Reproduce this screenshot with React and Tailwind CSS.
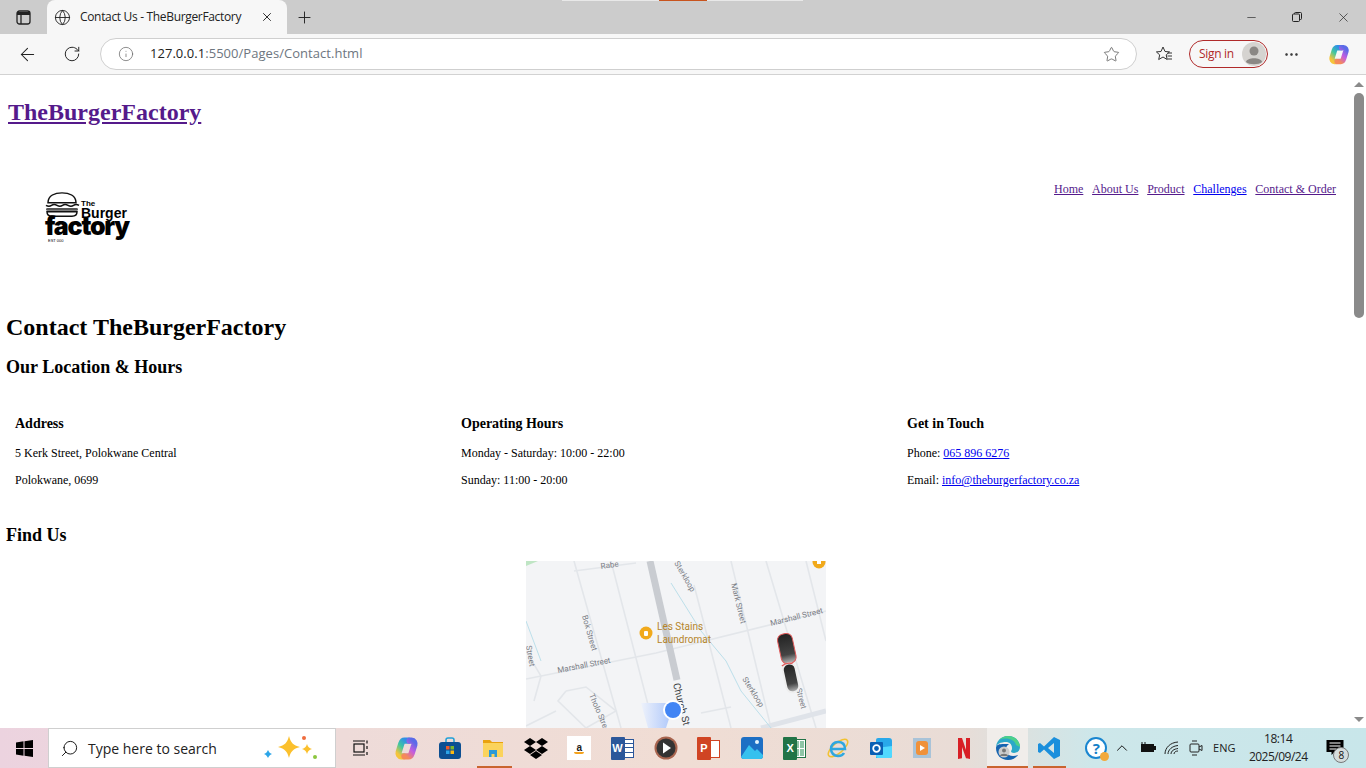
import React from "react";
import { ArrowLeft, RotateCw, Info, Star, Globe, X, Plus, Minus, MoreHorizontal, ChevronUp, Search } from "lucide-react";

const serif = "font-['Liberation_Serif',serif]";

function MapArt() {
  const road = "#e3e6ea";
  return (
    <svg width="300" height="167" viewBox="0 0 300 167" className="block">
      <defs>
        <linearGradient id="cone" x1="1" y1="0.5" x2="0" y2="0.5"><stop offset="0" stopColor="#a9c4fa" /><stop offset="1" stopColor="#eef2fb" /></linearGradient>
        <linearGradient id="car" x1="0" y1="0" x2="0" y2="1"><stop offset="0" stopColor="#222" /><stop offset="0.7" stopColor="#444" /><stop offset="1" stopColor="#bbb" /></linearGradient>
      </defs>
      <rect width="300" height="167" fill="#f3f4f6" />
      <path d="M0 0h12l-12 5z" fill="#bfe5c4" />
      <g stroke={road} strokeWidth="1.6" fill="none">
        <path d="M48 0L95 167M85 0L128 167M205 0L245 167M240 0L290 167M280 0L300 80" />
        <path d="M0 118L130 92L300 50M48 10L110 2" />
        <path d="M168 24L205 167M0 165L30 150M175 152L205 146" />
        <path d="M40 130L60 126L90 150L60 167M40 130L32 140L60 167" />
        <path d="M0 90L15 115L8 140" />
      </g>
      <path d="M124 0L151 119" stroke="#c9ccd1" strokeWidth="7" />
      <path d="M235 167L300 150" stroke="#dfe3e9" strokeWidth="5" />
      <path d="M145 22L175 70L200 100L215 130L245 167M0 60L15 100" stroke="#bcdfea" strokeWidth="1" fill="none" />
      <path d="M115 142H148L140 167H122z" fill="url(#cone)" />
      <circle cx="120" cy="72" r="6.5" fill="#f1a91b" />
      <rect x="118" y="70" width="4" height="5" rx="1" fill="#fff" />
      <circle cx="293" cy="1" r="6.5" fill="#f1a91b" />
      <rect x="291" y="0" width="4" height="3" fill="#fff" />
      <g fontFamily="'Roboto',sans-serif" fontSize="8" fill="#7c8087">
        <text x="75" y="8" transform="rotate(-8 75 8)">Rabe</text>
        <text x="148" y="2" transform="rotate(60 148 2)">Sterkloop</text>
        <text x="205" y="23" transform="rotate(76 205 23)">Mark Street</text>
        <text x="56" y="55" transform="rotate(74 56 55)">Bok Street</text>
        <text x="32" y="112" transform="rotate(-11 32 112)">Marshall Street</text>
        <text x="245" y="65" transform="rotate(-14 245 65)">Marshall Street</text>
        <text x="216" y="118" transform="rotate(58 216 118)">Sterkloop</text>
        <text x="63" y="134" transform="rotate(67 63 134)">Tholo Street</text>
        <text x="0" y="85" transform="rotate(80 0 85)">Street</text>
        <text x="270" y="128" transform="rotate(75 270 128)">Street</text>
      </g>
      <text x="147" y="123" transform="rotate(76 147 123)" fontFamily="'Roboto',sans-serif" fontSize="10" fill="#3c4043">Church St</text>
      <g fontFamily="'Roboto',sans-serif" fontSize="10" fill="#b5852a">
        <text x="131" y="69">Les Stains</text>
        <text x="131" y="82">Laundromat</text>
      </g>
      <g transform="rotate(-12 265 100)">
        <rect x="256" y="72" width="15" height="30" rx="6" fill="url(#car)" stroke="#e05a5a" strokeWidth="1" />
        <rect x="255" y="102" width="13" height="29" rx="6" fill="url(#car)" stroke="#eeeeee" strokeWidth="2" />
        <path d="M255 103q5.500-3 11 0" stroke="#e05a5a" fill="none" strokeWidth="1.200" />
      </g>
      <circle cx="147" cy="149" r="10" fill="#fff" />
      <circle cx="147" cy="149" r="8" fill="#4285f4" />
    </svg>
  );
}

function Logo() {
  return (
    <div className="relative w-[88px] h-[52px]">
      <svg width="36" height="27" viewBox="0 0 36 30" className="absolute left-0 top-0" preserveAspectRatio="none">
        <path d="M3 13C3 5 10 2 17 2s14 3 14 11z" fill="#fff" stroke="#111" strokeWidth="1.5" />
        <path d="M1 16q3 2 5.500 0t5.500 0 5.500 0 5.500 0 5.500 0 5.500 0" fill="none" stroke="#111" strokeWidth="1.5" />
        <rect x="1" y="19" width="32" height="3" rx="1.500" fill="#555" />
        <path d="M2 23h30c0 4-3 5-5 5H7c-2 0-5-1-5-5z" fill="#fff" stroke="#111" strokeWidth="1.5" />
      </svg>
      <span className="absolute left-[36px] top-[9px] font-['Liberation_Sans',sans-serif] font-bold text-[8px] leading-[8px] text-black">The</span>
      <span className="absolute left-[36px] top-[15px] font-['Liberation_Sans',sans-serif] font-bold text-[14px] leading-[14px] text-black">Burger</span>
      <span className="absolute left-0 top-[21px] font-['Inter',sans-serif] font-black text-[25px] leading-[28px] tracking-[-1.2px] text-black">factory</span>
      <span className="absolute left-[3px] top-[48px] font-['Liberation_Sans',sans-serif] text-[4px] leading-[4px] text-black">EST 000</span>
    </div>
  );
}

function CopilotIcon({ size }) {
  return (
    <svg width={size} height={size} viewBox="0 0 24 24" fill="none" strokeWidth="6" strokeLinecap="round">
      <defs>
        <linearGradient id="cpl" x1="0.8" y1="0" x2="0.2" y2="1"><stop offset="0" stopColor="#2f8fe8" /><stop offset="0.5" stopColor="#3fc7a0" /><stop offset="1" stopColor="#f5c43b" /></linearGradient>
        <linearGradient id="cpr" x1="0.8" y1="0" x2="0.2" y2="1"><stop offset="0" stopColor="#5a6be8" /><stop offset="0.5" stopColor="#c45ce0" /><stop offset="1" stopColor="#f58a5a" /></linearGradient>
      </defs>
      <path d="M14 4.500H10C8 4.500 7.500 6 7 7.500L4.500 15.500C4 17.500 5 19.500 7 19.500H9" stroke="url(#cpl)" />
      <path d="M10 19.500H14C16 19.500 16.500 18 17 16.500L19.500 8.500C20 6.500 19 4.500 17 4.500H15" stroke="url(#cpr)" />
    </svg>
  );
}

function BrowserChrome() {
  return (
    <div className="shrink-0 font-['Open_Sans',sans-serif]">
      <div className="relative h-[34px] bg-[#cccccc] flex items-end">
        <div className="absolute left-[562px] top-0 h-px w-[241px] bg-[#e8e8e8]" />
        <div className="absolute left-[659px] top-0 h-px w-[48px] bg-[#c8541e]" />
        <div className="w-[47px] h-[34px] flex items-center justify-center">
          <svg width="15" height="15" viewBox="0 0 15 15" fill="none" stroke="#222" strokeWidth="1.300"><rect x="1" y="1" width="13" height="13" rx="2.500" /><path d="M1 3.500h13" strokeWidth="3" /><path d="M5 2v12" /></svg>
        </div>
        <div className="w-[240px] h-[34px] bg-[#f7f7f7] rounded-t-[8px] flex items-center pl-[7px] pr-[13px] text-[#222]">
          <Globe size={17} strokeWidth={1.3} />
          <span className="ml-[9px] text-[12px] leading-none flex-1 tracking-[-0.33px]">Contact Us - TheBurgerFactory</span>
          <X size={14} strokeWidth={1.6} />
        </div>
        <div className="w-[34px] h-[34px] flex items-center justify-center text-[#222]">
          <Plus size={19} strokeWidth={1.2} />
        </div>
        <div className="ml-auto flex h-[34px] items-center text-[#222]">
          <div className="w-[46px] flex justify-center"><Minus size={13} strokeWidth={1.2} /></div>
          <div className="w-[46px] flex justify-center">
            <svg width="12" height="12" viewBox="0 0 12 12" fill="none" stroke="#222"><rect x="1.500" y="3" width="7" height="7.500" rx="1" /><path d="M3.500 3V2.500a1 1 0 0 1 1-1h5a1 1 0 0 1 1 1v5a1 1 0 0 1-1 1H9" /></svg>
          </div>
          <div className="w-[46px] flex justify-center"><X size={15} strokeWidth={1.1} /></div>
        </div>
      </div>
      <div className="h-[41px] bg-[#f7f7f7] border-b border-[#d2d2d2] flex items-center text-[#222]">
        <div className="w-[55px] flex justify-center"><ArrowLeft size={21} strokeWidth={1.2} /></div>
        <div className="w-[33px] flex justify-center"><RotateCw size={18} strokeWidth={1.3} /></div>
        <div className="ml-[12px] w-[1037px] h-[32px] bg-white border border-[#cfcfcf] rounded-full flex items-center pl-[17px] pr-[16px]">
          <Info size={16} strokeWidth={1.1} className="text-[#666]" />
          <span className="ml-[16px] text-[13px] tracking-[0.04px] text-[#222]">127.0.0.1<span className="text-[#6e7680]">:5500/Pages/Contact.html</span></span>
          <Star size={17} strokeWidth={1.1} className="ml-auto text-[#555]" />
        </div>
        <div className="w-[52px] pl-[1px] flex justify-center">
          <svg width="18" height="18" viewBox="0 0 18 18" fill="none" stroke="#333" strokeWidth="1"><path d="M8 2l2 4.500 4.500.4-3.300 3 1 4.600L8 12l-4.300 2.500 1-4.600-3.300-3L6 6.500z" /><path d="M12.500 8h4.500M12.500 11h4.500M12.500 14h4.500" /></svg>
        </div>
        <div className="w-[79px] h-[28px] rounded-full border border-[#b02a2a] flex items-center pl-[9px] pr-[1px] justify-between">
          <span className="text-[12px] tracking-[-0.3px] text-[#b02a2a]">Sign in</span>
          <svg width="24" height="24" viewBox="0 0 24 24"><circle cx="12" cy="12" r="12" fill="#d5d3d0" /><circle cx="12" cy="9" r="4.500" fill="#8a8784" /><path d="M4 20c1-5 15-5 16 0-3 3-13 3-16 0z" fill="#8a8784" /></svg>
        </div>
        <div className="w-[47px] flex justify-center"><MoreHorizontal size={17} strokeWidth={1.5} /></div>
        <div className="ml-[13px] flex justify-center w-[22px]"><CopilotIcon size={23} /></div>
      </div>
    </div>
  );
}

function TaskIcon({ children, className = "w-[43.2px]", line, shaded }) {
  return (
    <div className={`relative h-[40px] shrink-0 flex items-center justify-center ${shaded ? "bg-[#f0edea]" : ""} ${className}`}>
      {children}
      {line && <div className={`absolute bottom-0 h-[2px] bg-[#c9642f] ${line}`} />}
    </div>
  );
}

function Taskbar() {
  return (
    <div className="h-[40px] shrink-0 flex items-center bg-[linear-gradient(90deg,#ecd3df_0%,#eedbd9_25%,#f0ddd4_50%,#e9dcd6_70%,#cde7ea_80%,#c8e6ea_100%)] font-['Open_Sans',sans-serif] text-[#111]">
      <div className="w-[48px] flex justify-center">
        <svg width="17" height="17" viewBox="0 0 17 17" fill="#000"><path d="M0 2.400L7.500 1.300V8H0zM8.500 1.200L17 0V8H8.500zM0 9h7.500v6.700L0 14.600zM8.500 9H17v8l-8.500-1.200z" /></svg>
      </div>
      <div className="w-[288px] h-[40px] bg-white border border-[#cfcfcf] flex items-center pl-[11px] relative">
        <Search size={19} strokeWidth={1.2} className="-scale-x-100" />
        <span className="ml-[9px] text-[14px] tracking-[0] text-[#222]">Type here to search</span>
        <svg width="66" height="30" viewBox="0 0 66 30" className="absolute right-[14px] top-[5px]">
          <path d="M34 2c2 7 4 9 11 11-7 2-9 4-11 11-2-7-4-9-11-11 7-2 9-4 11-11z" fill="#fbc02d" />
          <path d="M52 10c1 3 2 4 5 5-3 1-4 2-5 5-1-3-2-4-5-5 3-1 4-2 5-5z" fill="#fbc02d" />
          <path d="M13 16c1 2 1.500 3 4 4-2.500 1-3 2-4 4-1-2-1.500-3-4-4 2.500-1 3-2 4-4z" fill="#2ba5e8" />
          <circle cx="49" cy="4" r="2" fill="#ef6c3e" />
          <circle cx="60" cy="23" r="2" fill="#8cc63f" />
        </svg>
      </div>
      <TaskIcon className="w-[49px]">
        <svg width="16" height="18" viewBox="0 0 16 18" fill="none" stroke="#111" strokeWidth="1.200"><rect x="1" y="5" width="10" height="8" /><path d="M0 2h12M0 16h12M14 1.500v3M14 7v3M14 13v3" /></svg>
      </TaskIcon>
      <TaskIcon><CopilotIcon size={25} /></TaskIcon>
      <TaskIcon>
        <svg width="24" height="24" viewBox="0 0 24 24"><path d="M8 6V4a2 2 0 0 1 2-2h4a2 2 0 0 1 2 2v2" fill="none" stroke="#1fa0d8" strokeWidth="1.500" /><rect x="1" y="6" width="22" height="17" rx="3" fill="#0c4f92" /><rect x="8" y="10" width="3.500" height="3.500" fill="#ef5a29" /><rect x="12.500" y="10" width="3.500" height="3.500" fill="#7cb62b" /><rect x="8" y="14.500" width="3.500" height="3.500" fill="#2ba4e8" /><rect x="12.500" y="14.500" width="3.500" height="3.500" fill="#fcb813" /></svg>
      </TaskIcon>
      <TaskIcon line="left-[6px] right-[3px]">
        <svg width="22" height="20" viewBox="0 0 22 20"><path d="M1 2h7l2 2h11v4H1z" fill="#e9a20f" /><path d="M1 5h20v14H1z" fill="#fbd35c" /><path d="M7 12h8v7h-2.500v-3h-3v3H7z" fill="#2b9ad8" /></svg>
      </TaskIcon>
      <TaskIcon>
        <svg width="24" height="22" viewBox="0 0 24 22" fill="#000"><path d="M6 1l6 4-6 4-6-4zM18 1l6 4-6 4-6-4zM6 9l6 4-6 4-6-4zM18 9l6 4-6 4-6-4zM12 14l6 4-6 4-6-4z" /></svg>
      </TaskIcon>
      <TaskIcon>
        <div className="w-[24px] h-[24px] bg-white flex flex-col items-center justify-center leading-none font-['Liberation_Sans',sans-serif]">
          <span className="text-[10px] font-bold text-[#222] leading-[9px]">a</span>
          <span className="w-[10px] h-[2px] rounded-b-full bg-[#f4a21c]" />
        </div>
      </TaskIcon>
      <TaskIcon>
        <div className="relative w-[24px] h-[23px]">
          <div className="absolute left-[10px] top-[2px] w-[13px] h-[19px] bg-white border border-[#2b579a] flex flex-col justify-around py-[2px] pl-[2px]">
            <span className="h-px bg-[#2b579a]" /><span className="h-px bg-[#2b579a]" /><span className="h-px bg-[#2b579a]" />
          </div>
          <div className="absolute left-0 top-0 w-[14px] h-[23px] bg-[#2b579a] rounded-[1px] flex items-center justify-center text-white font-bold text-[11px] font-['Liberation_Sans',sans-serif]">W</div>
        </div>
      </TaskIcon>
      <TaskIcon>
        <svg width="24" height="24" viewBox="0 0 24 24"><circle cx="12" cy="12" r="11.500" fill="#a8654f" /><circle cx="12" cy="12" r="9.500" fill="#333" /><path d="M9 6.500l8 5.500-8 5.500z" fill="#fff" /></svg>
      </TaskIcon>
      <TaskIcon>
        <div className="relative w-[24px] h-[23px]">
          <div className="absolute left-[10px] top-[3px] w-[13px] h-[18px] bg-white border border-[#d04423]" />
          <div className="absolute left-0 top-0 w-[14px] h-[23px] bg-[#d04423] rounded-[1px] flex items-center justify-center text-white font-bold text-[11px] font-['Liberation_Sans',sans-serif]">P</div>
        </div>
      </TaskIcon>
      <TaskIcon>
        <svg width="22" height="22" viewBox="0 0 22 22"><rect width="22" height="22" rx="3" fill="#1d6fc4" /><path d="M0 20L8 8l6 6 2-2 6 6v1a3 3 0 0 1-3 3H3a3 3 0 0 1-3-2z" fill="#35c1ee" /><circle cx="16" cy="5" r="2" fill="#e3f4fd" /></svg>
      </TaskIcon>
      <TaskIcon>
        <div className="relative w-[24px] h-[23px]">
          <div className="absolute left-[10px] top-[2px] w-[13px] h-[19px] bg-white border border-[#217346] grid grid-cols-2 gap-px p-px">
            <span className="bg-[#8fc5a6]" /><span className="bg-[#8fc5a6]" /><span className="bg-[#8fc5a6]" /><span className="bg-[#8fc5a6]" />
          </div>
          <div className="absolute left-0 top-0 w-[14px] h-[23px] bg-[#217346] rounded-[1px] flex items-center justify-center text-white font-bold text-[11px] font-['Liberation_Sans',sans-serif]">X</div>
        </div>
      </TaskIcon>
      <TaskIcon>
        <svg width="24" height="24" viewBox="0 0 24 24" fill="none"><ellipse cx="12" cy="12" rx="12" ry="5" transform="rotate(-40 12 12)" stroke="#f2c230" strokeWidth="1.500" /><path d="M5 13h14c0-5-3-7-7-7s-7 3-7 7 3 7 7 7c3 0 5-1 6-3" stroke="#2fa7e0" strokeWidth="2.500" /></svg>
      </TaskIcon>
      <TaskIcon>
        <svg width="24" height="24" viewBox="0 0 24 24"><path d="M8 2h11a3 3 0 0 1 3 3v15a2 2 0 0 1-2 2H6V4a2 2 0 0 1 2-2z" fill="#28a8ea" /><path d="M6 12l16-2v10a2 2 0 0 1-2 2H8a2 2 0 0 1-2-2z" fill="#50d9ff" /><rect x="0" y="6" width="13" height="13" rx="1" fill="#0a5fb4" /><circle cx="6.500" cy="12.500" r="3.300" fill="none" stroke="#fff" strokeWidth="1.800" /></svg>
      </TaskIcon>
      <TaskIcon className="w-[37px]">
        <svg width="20" height="22" viewBox="0 0 20 22"><rect x="1" y="1" width="18" height="20" fill="#a9c3d8" /><rect x="4" y="4" width="12" height="14" rx="3" fill="#f0913a" /><path d="M8 8l5 3-5 3z" fill="#fff" /></svg>
      </TaskIcon>
      <TaskIcon className="w-[47px]">
        <svg width="12" height="21" viewBox="0 0 12 21"><path d="M0 0h4l4 12V0h4v21c-1.300-.4-2.700-.6-4-.7L4 9v11.200L0 21z" fill="#d81f26" /></svg>
      </TaskIcon>
      <TaskIcon className="w-[41px]" line="left-0 right-0" shaded>
        <svg width="26" height="26" viewBox="0 0 26 26"><path d="M1 13C1 6 6 1 13 1s12 5 12 11c0 4-3 6-6 6-2 0-3-1-3-2 1-1 1-2 1-3 0-4-3-6-6-6-5 0-10 2-10 6z" fill="#2aa8c8" /><path d="M25 12c0-6-5-11-12-11-4 0-7 2-9 4 6-3 16-1 17 5z" fill="#4cd08a" /><path d="M1 13c0 7 5 12 12 12 4 0 8-2 10-5-5 2-10 1-12-3-1-3 0-6 3-8-6 0-13-1-13 4z" fill="#1564b0" /><circle cx="9" cy="17" r="5.500" fill="#ccc" /><circle cx="9" cy="15.500" r="2" fill="#777" /><path d="M5 21c0-3 8-3 8 0z" fill="#777" /></svg>
      </TaskIcon>
      <TaskIcon className="w-[41px]" line="left-[5px] right-[3px]">
        <svg width="24" height="24" viewBox="0 0 24 24"><path d="M17 1l6 3v16l-6 3-10-9.500L3 17l-2-1V8l2-1 4 3.500zM17 7l-6 5 6 5z" fill="#1a8fdc" fillRule="evenodd" /></svg>
      </TaskIcon>
      <div className="ml-[14px] w-[26px] flex justify-center">
        <div className="relative w-[22px] h-[22px] rounded-full bg-white border-2 border-[#1a86d0] flex items-center justify-center text-[#1580c8] font-bold text-[15px] leading-none">
          ?
          <span className="absolute -right-[4px] -bottom-[4px] w-[9px] h-[9px] rounded-full bg-[#f2a93b]" />
        </div>
      </div>
      <div className="w-[26px] flex justify-center"><ChevronUp size={18} strokeWidth={1.3} /></div>
      <div className="w-[24px] flex justify-center">
        <svg width="17" height="12" viewBox="0 0 17 12"><rect x="2" y="2" width="13" height="8" fill="#111" /><rect x="15" y="4" width="2" height="4" fill="#111" /><path d="M3 0v2M6 0v2" stroke="#111" /></svg>
      </div>
      <div className="w-[25px] flex justify-center">
        <svg width="15" height="14" viewBox="0 0 15 14" fill="none" stroke="#222"><path d="M1 13C1 7 6 1.500 14 1M4 13c0-4 4-8 10-8.500M7 13c0-3 3-5 7-5.500M10 13c0-2 2-3 4-3" /></svg>
      </div>
      <div className="w-[24px] flex justify-center">
        <svg width="14" height="18" viewBox="0 0 14 18" fill="none" stroke="#222"><rect x="1" y="5" width="9" height="8" rx="1" /><path d="M10 8l3-1.500v5L10 10M3 2h5M3 16h5" /></svg>
      </div>
      <div className="w-[32px] text-center text-[11px] text-[#222]">ENG</div>
      <div className="ml-[2px] w-[72px] flex flex-col items-center text-[12px] leading-[18px] text-[#222]">
        <span className="tracking-[-0.4px]">18:14</span>
        <span className="tracking-[-0.5px]">2025/09/24</span>
      </div>
      <div className="relative ml-[12px] w-[22px] h-[30px] flex items-center">
        <svg width="18" height="16" viewBox="0 0 17 16"><path d="M0 0h17v12H8l-3 3v-3H0z" fill="#000" /><path d="M3 3h11M3 6h11M3 9h7" stroke="#fff" /></svg>
        <span className="absolute left-[7px] top-[14px] w-[16px] h-[16px] rounded-full bg-[#d5dcdc] border border-[#777] flex items-center justify-center text-[10px] leading-none">8</span>
      </div>
    </div>
  );
}

function Scrollbar() {
  return (
    <div className="w-[15px] shrink-0 bg-white flex flex-col items-center">
      <div className="h-[18px] flex items-center">
        <div className="w-0 h-0 border-x-[5px] border-x-transparent border-b-[5px] border-b-[#8a8a8a]" />
      </div>
      <div className="w-[10px] h-[225px] rounded-full bg-[#8a8a8a]" />
      <div className="mt-auto h-[17px] flex items-center">
        <div className="w-0 h-0 border-x-[5px] border-x-transparent border-t-[5px] border-t-[#8a8a8a]" />
      </div>
    </div>
  );
}

function Column({ title, children }) {
  return (
    <div>
      <h4 className="text-[14px] font-bold leading-[16px] mb-[14px]">{title}</h4>
      <div className="flex flex-col gap-[13px] text-[12px] leading-[14px]">{children}</div>
    </div>
  );
}

function Page() {
  const link = "text-[#0000ee] underline";
  const visited = "text-[#551a8b] underline";
  return (
    <div className={`flex-1 min-w-0 overflow-hidden bg-white text-black ${serif}`}>
      <h1 className="pl-[8px] pt-[23px] text-[24px] font-bold leading-[28px]">
        <a className={visited}>TheBurgerFactory</a>
      </h1>
      <div className="mt-[55px] flex justify-between items-start h-[69px]">
        <div className="ml-[45px] mt-[10px]"><Logo /></div>
        <nav className="flex gap-[8.75px] text-[12px] leading-[14px] pr-[15px] pt-[1px]">
          <a className={visited}>Home</a>
          <a className={visited}>About Us</a>
          <a className={visited}>Product</a>
          <a className={link}>Challenges</a>
          <a className={visited}>Contact &amp; Order</a>
        </nav>
      </div>
      <h2 className="mt-[63px] pl-[6px] text-[24px] font-bold leading-[28px]">Contact TheBurgerFactory</h2>
      <h3 className="mt-[16px] pl-[6px] text-[18px] font-bold leading-[21px]">Our Location &amp; Hours</h3>
      <div className="mt-[38px] pl-[15px] grid grid-cols-[446px_446px_1fr]">
        <Column title="Address">
          <p>5 Kerk Street, Polokwane Central</p>
          <p>Polokwane, 0699</p>
        </Column>
        <Column title="Operating Hours">
          <p>Monday - Saturday: 10:00 - 22:00</p>
          <p>Sunday: 11:00 - 20:00</p>
        </Column>
        <Column title="Get in Touch">
          <p>Phone: <a className={link}>065 896 6276</a></p>
          <p>Email: <a className={link}>info@theburgerfactory.co.za</a></p>
        </Column>
      </div>
      <h3 className="mt-[38px] pl-[6px] text-[18px] font-bold leading-[21px]">Find Us</h3>
      <div className="mt-[15px] flex justify-center"><MapArt /></div>
    </div>
  );
}

export default function App() {
  return (
    <div className="w-[1366px] h-[768px] flex flex-col overflow-hidden">
      <BrowserChrome />
      <div className="flex-1 min-h-0 flex">
        <Page />
        <Scrollbar />
      </div>
      <Taskbar />
    </div>
  );
}
